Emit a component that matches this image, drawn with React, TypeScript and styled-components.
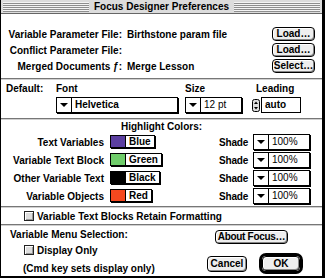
import styled, { createGlobalStyle } from "styled-components";

const GlobalStyle = createGlobalStyle`
  body {
    margin: 0;
    background: #fff;
  }
  * {
    box-sizing: border-box;
  }
`;

const colorRows = [
  { label: "Text Variables", color: "#5b3fa0", name: "Blue" },
  { label: "Variable Text Block", color: "#6fcc6a", name: "Green" },
  { label: "Other Variable Text", color: "#000", name: "Black" },
  { label: "Variable Objects", color: "#f5481f", name: "Red" },
];

const StepperIcon = () => (
  <svg width="8" height="13" viewBox="0 0 8 13">
    <rect x="0.5" y="0.5" width="7" height="12" rx="2" fill="#ddd" stroke="#000" />
    <path d="M4 2.5 L6 5 L2 5 Z" fill="#000" />
    <path d="M4 10.5 L6 8 L2 8 Z" fill="#000" />
  </svg>
);

const App = () => {
  return (
    <>
      <GlobalStyle />
      <Window>
        <TitleBar>
          <Stripes />
          <Title>Focus Designer Preferences</Title>
          <Stripes />
        </TitleBar>

        <FileGrid>
          <FileLabel>Variable Parameter File:</FileLabel>
          <FileValue>Birthstone param file</FileValue>
          <Button>Load…</Button>
          <FileLabel>Conflict Parameter File:</FileLabel>
          <FileValue />
          <Button>Load…</Button>
          <FileLabel>Merged Documents ƒ:</FileLabel>
          <FileValue>Merge Lesson</FileValue>
          <Button>Select…</Button>
        </FileGrid>

        <Separator />

        <DefaultGrid>
          <span>Default:</span>
          <span>Font</span>
          <span>Size</span>
          <LeadingLabel>Leading</LeadingLabel>
          <span />
          <Popup $w={122}>
            <PopArrow />
            <PopText>Helvetica</PopText>
          </Popup>
          <Popup $w={57}>
            <PopArrow />
            <PopText $regular>12 pt</PopText>
          </Popup>
          <LeadingBox>
            <StepperIcon />
            <Field>auto</Field>
          </LeadingBox>
        </DefaultGrid>

        <Separator />

        <SectionTitle>Highlight Colors:</SectionTitle>
        <ColorGrid>
          {colorRows.map((row) => (
            <ColorRow key={row.label}>
              <ColorLabel>{row.label}</ColorLabel>
              <div>
                <Chip>
                  <Swatch $color={row.color} />
                  <ChipText>{row.name}</ChipText>
                </Chip>
              </div>
              <ShadeLabel>Shade</ShadeLabel>
              <Popup $w={57}>
                <PopArrow />
                <PopText $regular>100%</PopText>
              </Popup>
            </ColorRow>
          ))}
        </ColorGrid>

        <Separator />

        <CheckRow $indent={23}>
          <CheckBox />
          Variable Text Blocks Retain Formatting
        </CheckRow>

        <Separator />

        <BottomArea>
          <LeftCol>
            <MenuTitle>Variable Menu Selection:</MenuTitle>
            <CheckRow $indent={14}>
              <CheckBox />
              Display Only
            </CheckRow>
            <Hint>(Cmd key sets display only)</Hint>
          </LeftCol>
          <RightCol>
            <AboutButton>About Focus…</AboutButton>
            <ActionRow>
              <Button $w={40} $h={16}>Cancel</Button>
              <DefaultRing>
                <Button $w={38} $h={15}>OK</Button>
              </DefaultRing>
            </ActionRow>
          </RightCol>
        </BottomArea>
      </Window>
    </>
  );
};

const Window = styled.div`
  width: 325px;
  height: 278px;
  display: flex;
  flex-direction: column;
  background: #fff;
  border-left: 1px solid #000;
  border-right: 3px solid #000;
  border-bottom: 2px solid #000;
  font-family: "Liberation Sans", Arial, sans-serif;
  font-size: 10px;
  font-weight: bold;
  color: #000;
  white-space: nowrap;
`;

const TitleBar = styled.div`
  height: 14px;
  display: flex;
  align-items: center;
  gap: 3px;
  padding: 0 2px;
  background: #dcdcdc;
  border-bottom: 1px solid #666;
`;

const Stripes = styled.div`
  flex: 1;
  height: 10px;
  background: repeating-linear-gradient(
    to bottom,
    #f4f4f4 0,
    #f4f4f4 1px,
    #8e8e8e 1px,
    #8e8e8e 2px
  );
`;

const Title = styled.span`
  line-height: 13px;
  padding: 0 2px;
`;

const FileGrid = styled.div`
  display: grid;
  grid-template-columns: 121px 1fr 43px;
  grid-auto-rows: 16px;
  align-items: center;
  padding: 12px 7px 4px 0;
`;

const FileLabel = styled.span`
  text-align: right;
`;

const FileValue = styled.span`
  padding-left: 5px;
`;

const Button = styled.button<{ $w?: number; $h?: number }>`
  width: ${(p) => (p.$w ? `${p.$w}px` : "100%")};
  height: ${(p) => p.$h ?? 14}px;
  padding: 0;
  border: 1px solid #000;
  border-radius: 4px;
  background: #eee;
  box-shadow: inset 1px 1px 0 #fff, inset -1px -1px 0 #888;
  font: inherit;
  font-weight: bold;
  color: #000;
  line-height: 1;
  white-space: nowrap;
`;

const AboutButton = styled(Button)`
  width: 73px;
  margin-right: 15px;
  letter-spacing: -0.3px;
`;

const Separator = styled.div`
  height: 2px;
  border-top: 1px solid #777;
  border-bottom: 1px solid #d0d0d0;
`;

const DefaultGrid = styled.div`
  display: grid;
  grid-template-columns: 50px 129px 67px 50px;
  grid-template-rows: 12px 16px;
  row-gap: 3px;
  align-items: center;
  padding: 2px 0 5px 5px;
`;

const LeadingLabel = styled.span`
  padding-left: 4px;
`;

const Popup = styled.div<{ $w: number }>`
  width: ${(p) => p.$w}px;
  height: 16px;
  display: flex;
  background: #fff;
  border: 1px solid #000;
  box-shadow: 1px 1px 0 #000;
`;

const PopArrow = styled.div`
  width: 15px;
  flex: none;
  display: flex;
  align-items: center;
  justify-content: center;
  border-right: 1px solid #000;

  &::after {
    content: "";
    border-left: 4px solid transparent;
    border-right: 4px solid transparent;
    border-top: 4px solid #000;
  }
`;

const PopText = styled.span<{ $regular?: boolean }>`
  padding-left: 3px;
  line-height: 14px;
  font-weight: ${(p) => (p.$regular ? "normal" : "bold")};
`;

const LeadingBox = styled.div`
  display: flex;
  align-items: center;
  gap: 1px;
`;

const Field = styled.div`
  width: 40px;
  height: 16px;
  line-height: 14px;
  padding-left: 3px;
  border: 1px solid #000;
`;

const SectionTitle = styled.div`
  height: 12px;
  line-height: 12px;
  margin-top: 1px;
  text-align: center;
`;

const ColorGrid = styled.div`
  display: flex;
  flex-direction: column;
  padding-bottom: 1px;
`;

const ColorRow = styled.div`
  display: grid;
  grid-template-columns: 109px 109px 34px 57px;
  height: 18px;
  align-items: center;
`;

const ColorLabel = styled.span`
  text-align: right;
  padding-right: 6px;
`;

const ShadeLabel = styled.span`
  letter-spacing: -0.2px;
`;

const Chip = styled.div`
  display: inline-flex;
  height: 13px;
  border: 1px solid #000;
  box-shadow: 1px 1px 0 #000;
  background: #fff;
`;

const Swatch = styled.div<{ $color: string }>`
  width: 15px;
  background: ${(p) => p.$color};
  border-right: 1px solid #000;
`;

const ChipText = styled.span`
  padding: 0 3px;
  line-height: 11px;
`;

const CheckRow = styled.div<{ $indent: number }>`
  height: 16px;
  display: flex;
  align-items: center;
  gap: 3px;
  padding-left: ${(p) => p.$indent}px;
`;

const CheckBox = styled.span`
  width: 10px;
  height: 10px;
  border: 1px solid #222;
  background: #ddd;
  box-shadow: inset 1px 1px 0 #fff, inset -1px -1px 0 #999;
`;

const BottomArea = styled.div`
  flex: 1;
  display: flex;
  justify-content: space-between;
`;

const LeftCol = styled.div`
  display: flex;
  flex-direction: column;
  padding: 3px 0 0 9px;
`;

const MenuTitle = styled.div`
  height: 12px;
  line-height: 12px;
  margin-bottom: 1px;
`;

const Hint = styled.div`
  margin: 5px 0 0 13px;
  line-height: 12px;
`;

const RightCol = styled.div`
  display: flex;
  flex-direction: column;
  align-items: flex-end;
  padding: 4px 19px 0 0;
`;

const ActionRow = styled.div`
  display: flex;
  align-items: center;
  gap: 12px;
  margin-top: 9px;
`;

const DefaultRing = styled.div`
  border: 3px solid #000;
  border-radius: 7px;
  display: flex;
`;

export default App;
